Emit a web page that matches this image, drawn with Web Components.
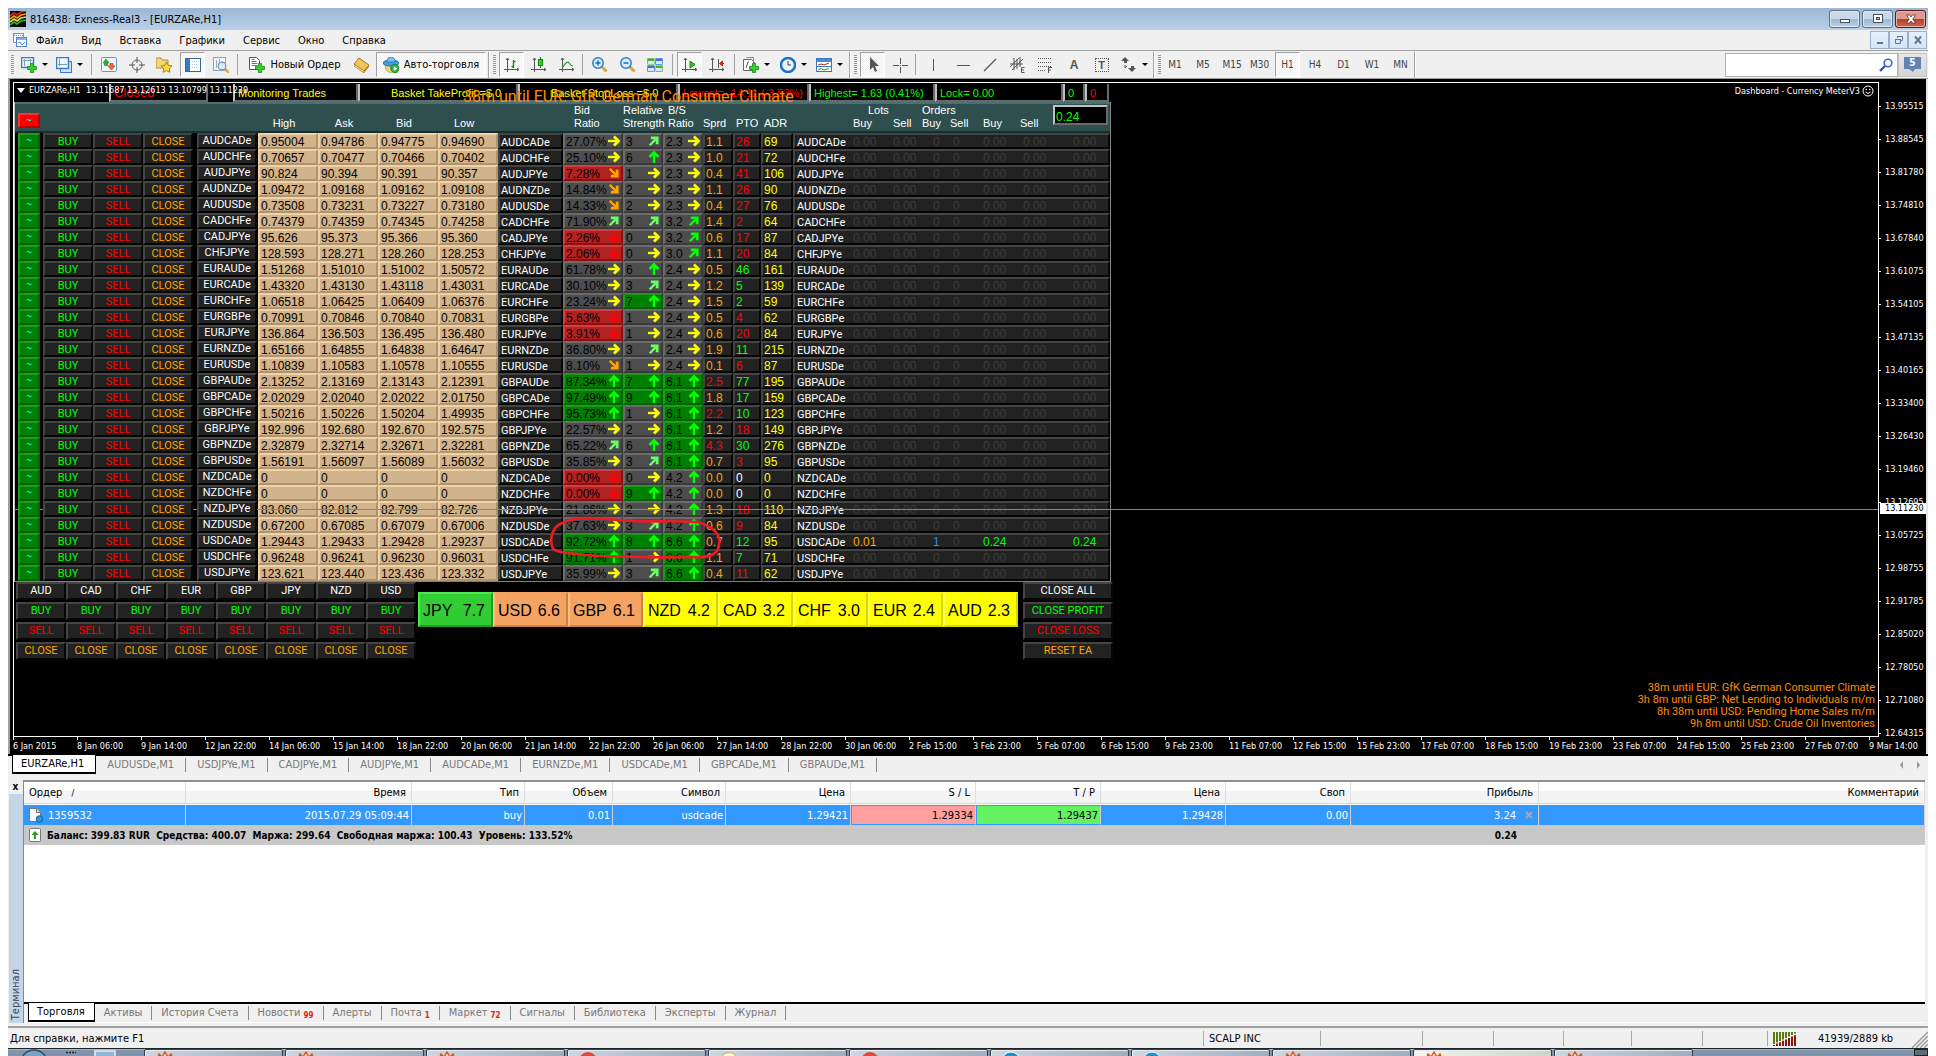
<!DOCTYPE html>
<html lang="ru">
<head>
<meta charset="utf-8">
<title>816438: Exness-Real3 - [EURZARe,H1]</title>
<style>
html,body{margin:0;height:100%;background:#fff}
body{font-family:"DejaVu Sans Condensed","DejaVu Sans",sans-serif;font-size:11px;color:#000;overflow:hidden}
</style>
</head>
<body>
<mt-app></mt-app>
<script>
const BASE = `:host,*{box-sizing:border-box}button{font:inherit;color:inherit;margin:0;padding:0;border:0;background:none;border-radius:0;white-space:nowrap;text-align:center}svg{display:block;flex:none}`;
class MtElement extends HTMLElement {
  connectedCallback() {
    if (this.shadowRoot) return;
    this.attachShadow({mode:'open'}).innerHTML = `<style>${BASE}${this.css()}</style>${this.html()}`;
  }
  css(){return ':host{display:block}'}
  html(){return '<slot></slot>'}
}
const svg = (w,h,body,extra='') => `<svg width="${w}" height="${h}" viewBox="0 0 ${w} ${h}" aria-hidden="true" ${extra}>${body}</svg>`;

customElements.define('mt-titlebar', class extends MtElement {
  css(){return `
:host{display:flex;align-items:center;height:22px;padding:0 2px;background:linear-gradient(#9cb6d3,#b8d0ea);font-size:11px}
.t{flex:1;margin-left:4px;white-space:nowrap}
.w{display:flex;gap:2px}
.w button{width:31px;height:18px;border:1px solid #5c6f86;border-radius:3px;background:linear-gradient(#c8d8e9 48%,#9fb7d0 50%,#b9cfe4);display:flex;align-items:center;justify-content:center;box-shadow:inset 0 0 0 1px #dfe9f4}
.w .x{border-color:#5a1a1c;background:linear-gradient(#dd9a90 48%,#bb3a26 50%,#cf6a4e);box-shadow:inset 0 0 0 1px #e8b0a8}`}
  html(){return svg(16,16,`<path d="M0 0h16v16H0z" fill="#0a0a08"/><g fill="none" stroke-width="1.6"><path d="M0 5l4-3 3 2 4-3 5-1" stroke="#e02818"/><path d="M0 8l4-3 3 2 4-3 5-1" stroke="#f0a020"/><path d="M0 11l4-3 3 2 4-3 5-1" stroke="#e8e030"/><path d="M0 14l4-3 3 2 4-3 5-1" stroke="#30b030"/></g>`)
  +`<span class="t">816438: Exness-Real3 - [EURZARe,H1]</span><div class="w">
<button aria-label="Minimize">${svg(12,10,'<rect x="1.500" y="5.500" width="9" height="3" fill="#fff" stroke="#44505e"/>')}</button>
<button aria-label="Maximize">${svg(12,10,'<rect x="1.500" y=".500" width="9" height="8" fill="#fff" stroke="#44505e"/><rect x="4.500" y="3.500" width="3" height="2" fill="#9fb7d0" stroke="#44505e"/>')}</button>
<button class="x" aria-label="Close">${svg(12,10,'<path d="M1.500 1h3L6 3l1.500-2h3L7.800 5l2.700 4h-3L6 7 4.500 9h-3l2.700-4z" fill="#fff" stroke="#5a3038" stroke-width=".800"/>')}</button></div>`}
});

customElements.define('mt-menubar', class extends MtElement {
  css(){return `
:host{display:flex;align-items:center;height:21px;padding:0 1px 0 5px;background:#f0f0f0;border-bottom:1px solid #a0a0a0}
nav{display:flex;gap:18px;margin-left:9px;flex:1}
.w{display:flex}.w button{width:19px;height:18px;border:1px solid #9ab0c6;background:linear-gradient(#e4f1fb,#d3e6f6);display:flex;align-items:center;justify-content:center}`}
  html(){return svg(14,14,`<rect x=".5" y=".5" width="10" height="9" fill="#fff" stroke="#6a96d8"/><path d="M1 2.500h9" stroke="#6a96d8" stroke-dasharray="1 1"/><rect x="3.500" y="4.500" width="10" height="9" fill="#fff" stroke="#5585d0"/><path d="M4 6h9" stroke="#8ab0e8" stroke-width="2"/><path d="M5 10l2-1 2 3 3-3" fill="none" stroke="#5585d0"/>`)
  +`<nav>${['Файл','Вид','Вставка','Графики','Сервис','Окно','Справка'].map(t=>`<button>${t}</button>`).join('')}</nav><div class="w">
<button aria-label="Minimize chart">${svg(10,10,'<path d="M2 8h6" stroke="#66788a" stroke-width="2"/>')}</button>
<button aria-label="Restore chart">${svg(10,10,'<path d="M3.500 3V1.500h5v4H7M3 1.500h6" stroke="#66788a" fill="none"/><path d="M1.500 4.500h5v4h-5zM1 4.500h6" fill="none" stroke="#66788a"/>')}</button>
<button aria-label="Close chart">${svg(10,10,'<path d="M2 1.500l6 7M8 1.500l-6 7" stroke="#66788a" stroke-width="2"/>')}</button></div>`}
});

const plus = (x,y)=>`<path d="M${x} ${y+3}h3v-3h3v3h3v3h-3v3h-3v-3h-3z" fill="#35d22c" stroke="#128a12" stroke-width=".8"/>`;
const axes = `<path d="M3.500 1v14M0 12.500h15M2 3l1.500-2L5 3M13 11l2 1.500-2 1.500" fill="none" stroke="#555"/>`;
const glass = s=>`<path d="M9.500 9.500l5 5" stroke="#d8a838" stroke-width="3"/><circle cx="6" cy="6" r="5.2" fill="#d6ecfb" stroke="#2f7cc8" stroke-width="1.500"/><path d="${s}" stroke="#2266aa" stroke-width="1.500"/>`;
const ICONS = {
  newchart:`<rect x=".5" y=".5" width="12" height="10" fill="#eaf3fd" stroke="#3b76c0" stroke-width="1.400"/><path d="M3.500 2v7M2 3.500h9M9.500 2v5" stroke="#7aa"/>`+plus(6.500,6.500),
  profile:`<rect x="4.500" y="4.500" width="11" height="11" fill="#cfe4fa" stroke="#3b76c0"/><rect x=".5" y=".5" width="12" height="11" fill="#eef6fe" stroke="#3b76c0" stroke-width="1.400"/><path d="M3.500 2v7M2 7.500h9" stroke="#79a"/>`,
  market:`<rect x=".5" y=".5" width="15" height="14" rx="1" fill="#eef5fd" stroke="#5b9ad8"/><path d="M3.500 8.500V6H2l3-4 3 4H6.500v2.500z" fill="#2eb02e" stroke="#16801a" stroke-width=".6"/><path d="M9 6.500h3V9h2l-3.500 4L7 9h2z" fill="#f0683a" stroke="#b03010" stroke-width=".6"/>`,
  cross:`<circle cx="8" cy="8" r="5" fill="none" stroke="#666"/><path d="M8 0v6M8 10v6M0 8h6M10 8h6" stroke="#555"/>`,
  star:`<path d="M0 1h5l1 2h6v8H0z" fill="#f2d77a" stroke="#b8902c"/><path d="M10.500 5l1.700 3.400 3.800.5-2.700 2.600.6 3.800-3.400-1.700-3.400 1.700.6-3.800L5 8.900l3.800-.5z" fill="#ffd83c" stroke="#c07a10"/>`,
  nav:`<rect x=".5" y="1.500" width="15" height="13" fill="#fff" stroke="#3567a8"/><path d="M1 2h4v12H1z" fill="#3c78c8"/><path d="M7 4.500h6M7 7.500h6M7 10.500h6" stroke="#a9c3e6" stroke-dasharray="1 1"/>`,
  tester:`<rect x=".5" y=".5" width="12" height="13" fill="#eef5fd" stroke="#86a6c8"/><path d="M3.500 3v8M6.500 2v7M9.500 4v6" stroke="#9ab"/><path d="M12 12l4 4" stroke="#d8a838" stroke-width="2.500"/><circle cx="9" cy="9" r="4" fill="#d6ecfb" fill-opacity=".8" stroke="#6a8cae"/>`,
  order:`<path d="M.5.5h7l3 3v9H.5z" fill="#fff" stroke="#555"/><path d="M2.500 4.500h5M2.500 6.500h6M2.500 8.500h6M2.500 2.500h3" stroke="#777"/>`+plus(6.500,6.500),
  book:`<path d="M5 1l10 7-5 6L0 7z" fill="#f0c65a" stroke="#a87418"/><path d="M0 7l10 7v2L0 9z" fill="#fff3c8" stroke="#a87418" stroke-width=".8"/><path d="M10 14l5-6v2l-5 6z" fill="#b97f1c"/>`,
  auto:`<path d="M2 8h12l-2 6-5 2-4-3z" fill="#f2cf86" stroke="#c09a40" stroke-width=".8"/><ellipse cx="8" cy="6" rx="8" ry="3" fill="#4a9ee0" stroke="#2070b0"/><path d="M4 5q0-5 4-5t4 5z" fill="#7fc0f0" stroke="#2070b0" stroke-width=".8"/><circle cx="12" cy="11.500" r="4.200" fill="#35b83a" stroke="#14802a"/><path d="M10.800 9.300l3.500 2.200-3.500 2.200z" fill="#fff"/>`,
  bars:axes+`<path d="M9.500 3v8M7.500 9.500h2M9.500 4.500h2" stroke="#128a12" stroke-width="1.400"/>`,
  candle:axes+`<path d="M9.500 0v11" stroke="#128a12"/><rect x="7.500" y="2.500" width="4" height="6" fill="#35d22c" stroke="#128a12"/>`,
  line:axes+`<path d="M4 10q4-7 6-4t4 3" fill="none" stroke="#2a9a2a" stroke-width="1.200"/>`,
  zin:glass('M6 3.500v5M3.500 6h5'), zout:glass('M3.500 6h5'),
  tile:`<g stroke="#fff" stroke-width=".5"><path d="M0 1h8v7H0zM8 8h8v7H8z" fill="#48b030"/><path d="M8 1h8v7H8zM0 8h8v7H0z" fill="#3a74d0"/></g><path d="M1 4h6v3H1zM9 4h6v3H9zM1 11h6v3H1zM9 11h6v3H9z" fill="#d8e8f8"/>`,
  scroll:axes+`<path d="M8 4l5 3.500L8 11z" fill="#35c22c" stroke="#128a12"/>`,
  shift:axes+`<path d="M9.500 2v9" stroke="#555"/><path d="M15 6.500h-3M13.500 4l-3 2.500 3 2.500z" stroke="#c02a10" fill="#c02a10"/>`,
  ind:`<path d="M.5 2.500h8l3 3v8H.5z" fill="#fff" stroke="#666"/><path d="M3.500.5h7v8" fill="none" stroke="#888"/><path d="M3 11l2-6 1 0" stroke="#555" fill="none"/>`+plus(6.500,6.500),
  clock:`<circle cx="8" cy="8" r="7" fill="#eaf4ff" stroke="#1c6cc8" stroke-width="2.400"/><path d="M8 4v4h3" fill="none" stroke="#345"/>`,
  tmpl:`<rect x=".5" y="1.500" width="15" height="13" fill="#fff" stroke="#3b76c0"/><path d="M1 2h14v3H1z" fill="#4a8ad8"/><path d="M2 8l3-1 3 1 5-2" stroke="#b03020" fill="none"/><path d="M1 9.500h14" stroke="#3b76c0"/><path d="M2 13l3-1.500 3 1.500 5-1.500" stroke="#2a9a2a" fill="none"/>`,
  cursor:`<path d="M5 0v13l3-3 2 5 2-1-2-5h4z" fill="#555"/>`,
  plusx:`<path d="M8.500 1v6M8.500 10v6M1 8.500h6M10 8.500h6M8.500 8v1" stroke="#555"/>`,
  vline:`<path d="M8.500 2v12" stroke="#555"/>`, hline:`<path d="M2 8.500h13" stroke="#555"/>`, trend:`<path d="M2 14L14 2" stroke="#555" stroke-width="1.200"/>`,
  chan:`<path d="M0 10L9 1M2 13L13 2M4 1v12M7 2v10M10 0v10M0 7h13" stroke="#555"/><path d="M14.500 10.500h-3v5h3M12 13h2" stroke="#555" fill="none"/>`,
  fibo:`<path d="M0 1.500h14M0 5.500h14M0 9.500h14M0 13.500h8" stroke="#555" stroke-dasharray="1 1"/><path d="M10.500 16v-5.500h3.500M11 13h2" stroke="#555" fill="none"/>`,
  arrows:`<path d="M4 0l4 4-2 0v2H3V4H0zM11 15l4-4h-2V9h-3v2H7z" fill="#555"/><path d="M4 8v3l2-2" stroke="#555" fill="none"/>`
};
const ic = (n,w=16)=>svg(w,16,ICONS[n]);
customElements.define('mt-tool', class extends MtElement {
  css(){return `:host{display:block;flex:none}
button{display:flex;align-items:center;justify-content:center;gap:5px;height:25px;width:100%;border:1px solid transparent;color:#000}
:host([on]) button{border-color:#a0a0a0 #fff #fff #a0a0a0;background:repeating-conic-gradient(#fff 0 25%,#f0f0f0 0 50%) 0 0/2px 2px}
:host([tf]) button{color:#444;font-size:10px}
:host([dd]) button::after{content:"";border:3px solid transparent;border-top-color:#000;border-bottom:0}`}
  html(){const i=this.getAttribute('icon');return `<button aria-label="${this.getAttribute('label')||i||''}">${i?ic(i):''}<slot></slot></button>`}
});
customElements.define('mt-toolbar', class extends MtElement {
  css(){return `
:host{display:flex;align-items:center;height:28px;padding-right:1px;background:#f0f0f0;border-bottom:1px solid #a0a0a0}
.g{width:3px;height:20px;margin:0 3px;background:repeating-linear-gradient(#999 0 1px,transparent 1px 2px);flex:none}
.s{width:1px;height:21px;background:#a0a0a0;flex:none}
.e{width:2px;height:26px;background:#a0a0a0;border-right:1px solid #fff;flex:none}
.m{margin-left:2px}.m4{margin-left:4px}
mt-tool{width:var(--w,28px)}
.l{color:#555;font:bold 12px "Liberation Sans",sans-serif}.T{border:1px dotted #555;line-height:12px;width:14px;font-size:11px}
.q{margin-left:auto;display:flex}
.box{display:flex;align-items:center;width:173px;height:24px;border:1px solid #b0b0b0;background:#fff;padding-right:4px}
input{border:0;outline:0;flex:1;min-width:0;font:inherit}
.n{width:29px;height:24px;display:flex;flex-direction:column;align-items:center;justify-content:center;background:linear-gradient(#e8e8e8,#d4d4d4);border:1px solid #c4c4c4}
.n span{width:17px;height:12px;background:#6482b4;color:#fff;font-weight:bold;line-height:12px;font-size:10px}`}
  html(){const t=(i,w,a='',txt='')=>`<mt-tool icon="${i}" ${a} style="--w:${w}px">${txt}</mt-tool>`;
  const f=(x,w,a='')=>`<mt-tool tf label="${x}" ${a} style="--w:${w}px">${x}</mt-tool>`;
  return `<i class="g"></i>${t('newchart',34,'dd')}${t('profile',36,'dd')}<i class="s m4"></i>${t('market',34)}${t('cross',22)}${t('star',32)}${t('nav',25,'on')}${t('tester',32)}<i class="s"></i>
${t('order',114,'','Новый Ордер')}${t('book',20)}${t('auto',110,'on class="m4"','Авто-торговля')}<i class="e m"></i><i class="g"></i>
${t('bars',25,'on')}${t('candle',30)}${t('line',26)}<i class="s m"></i>${t('zin',33)}${t('zout',23)}${t('tile',31)}<i class="s m"></i>${t('scroll',25,'on class="m4"')}${t('shift',30)}<i class="s m"></i>
${t('ind',42,'dd')}${t('clock',32,'dd')}${t('tmpl',40,'dd')}<i class="e"></i><i class="g"></i>
${t('cursor',25,'on')}${t('plusx',30)}<i class="s"></i>${t('vline',34)}${t('hline',26)}${t('trend',28)}${t('chan',28)}${t('fibo',28)}
<mt-tool label="Text" style="--w:28px"><span class="l">A</span></mt-tool><mt-tool label="Text label" style="--w:27px"><span class="l T">T</span></mt-tool>${t('arrows',38,'dd')}<i class="e"></i><i class="g"></i>
${f('M1',22)}${f('M5',34)}${f('M15',24)}${f('M30',31)}${f('H1',25,'on')}${f('H4',30)}${f('D1',27)}${f('W1',30)}${f('MN',27)}<i class="e"></i>
<div class="q"><label class="box"><input type="text" aria-label="Поиск">${svg(14,14,'<path d="M6 8l-5 5" stroke="#2c56a8" stroke-width="2.400"/><circle cx="9" cy="5" r="3.800" fill="#fff" stroke="#3a68c8" stroke-width="1.600"/>')}</label><button class="n"><span>5</span>${svg(8,3,'<path d="M0 0h6L4 3z" fill="#6482b4"/>')}</button></div>`}
});

const ARW={r:[0,'#ff0'],u:[-90,'#0f0'],n:[-45,'#6f6'],N:[-45,'#0f0'],s:[45,'#ffa500'],d:[90,'#f00']};
const arrow=k=>svg(12,12,`<g transform="rotate(${ARW[k][0]} 6 6)" fill="none" stroke="${ARW[k][1]}"><path d="M0 6h10" stroke-width="2.400"/><path d="M6 1.500L10.500 6 6 10.500" stroke-width="2.800"/></g>`);
const ROWS=`AUDCAD|0.95004|0.94786|0.94775|0.94690|27.07%-r|3-n|2.3-r|1.1|r26|69
AUDCHF|0.70657|0.70477|0.70466|0.70402|25.10%-r|6-u|2.3-r|1.0|r21|72
AUDJPY|90.824|90.394|90.391|90.357|7.28%-s-R|1-r|2.3-r|0.4|r41|106
AUDNZD|1.09472|1.09168|1.09162|1.09108|14.84%-s|2-r|2.3-r|1.1|r26|90
AUDUSD|0.73508|0.73231|0.73227|0.73180|14.33%-s|2-r|2.3-r|0.4|r27|76
CADCHF|0.74379|0.74359|0.74345|0.74258|71.90%-n|3-n|3.2-N|1.4|r2|64
CADJPY|95.626|95.373|95.366|95.360|2.26%-d-R|0-r|3.2-N|0.6|r17|87
CHFJPY|128.593|128.271|128.260|128.253|2.06%-d-R|0-r|3.0-N|1.1|r20|84
EURAUD|1.51268|1.51010|1.51002|1.50572|61.78%-r|6-u|2.4-r|0.5|g46|161
EURCAD|1.43320|1.43130|1.43118|1.43031|30.10%-r|3-n|2.4-r|1.2|g5|139
EURCHF|1.06518|1.06425|1.06409|1.06376|23.24%-r|7-u-G|2.4-r|1.5|g2|59
EURGBP|0.70991|0.70846|0.70840|0.70831|5.63%-d-R|1-r|2.4-r|0.5|r4|62
EURJPY|136.864|136.503|136.495|136.480|3.91%-d-R|1-r|2.4-r|0.6|r20|84
EURNZD|1.65166|1.64855|1.64838|1.64647|36.80%-r|3-n|2.4-r|1.9|g11|215
EURUSD|1.10839|1.10583|1.10578|1.10555|8.10%-s|1-r|2.4-r|0.1|r6|87
GBPAUD|2.13252|2.13169|2.13143|2.12391|87.34%-u-G|7-u-G|6.1-u-G|2.5|g77|195
GBPCAD|2.02029|2.02040|2.02022|2.01750|97.49%-u-G|9-u-G|6.1-u-G|1.8|g17|159
GBPCHF|1.50216|1.50226|1.50204|1.49935|95.73%-u-G|1-r|6.1-u-G|2.2|g10|123
GBPJPY|192.996|192.680|192.670|192.575|22.57%-r|2-r|6.1-u-G|1.2|r18|149
GBPNZD|2.32879|2.32714|2.32671|2.32281|65.22%-n|6-u|6.1-u-G|4.3|g30|276
GBPUSD|1.56191|1.56097|1.56089|1.56032|35.85%-r|3-n|6.1-u-G|0.7|r3|95
NZDCAD|0|0|0|0|0.00%-d-R|0-r|4.2-u|0.0|w0|0
NZDCHF|0|0|0|0|0.00%-d-R|9-u-G|4.2-u|0.0|w0|0
NZDJPY|83.060|82.812|82.799|82.726|21.86%-r|2-r|4.2-u|1.3|r18|110
NZDUSD|0.67200|0.67085|0.67079|0.67006|37.63%-r|3-n|4.2-u|0.6|r9|84
USDCAD|1.29443|1.29433|1.29428|1.29237|92.72%-u-G|8-u-G|6.6-u-G|0.7|g12|95
USDCHF|0.96248|0.96241|0.96230|0.96031|91.71%-u-G|1-r|6.6-u-G|1.1|g7|71
USDJPY|123.621|123.440|123.436|123.332|35.99%-r|3-n|6.6-u-G|0.4|r11|62`.split('\n').map(l=>l.split('|'));

const BEVEL=`.b{background:#222;border:2px solid;border-color:#444 #060606 #060606 #444}
.buy{color:#0f0}.sell{color:#f00}.close{color:#ffa500}.w{color:#fff}`;
customElements.define('mt-dashboard', class extends MtElement {
  css(){return `
:host{display:block;width:1097px;font:12px "Liberation Sans",Arial,sans-serif;color:#fff}
${BEVEL}
.st{display:flex;height:19px;padding-top:1px;font-size:11px;line-height:18px;white-space:nowrap}
.st span{flex:none;width:var(--w);padding-left:3px}.st .k{border:solid;border-width:0 2px 2px;border-color:#c0c0c0 #696969 #696969 #c0c0c0}
.st .m{padding-left:31px}.y{color:#ff0}.r{color:#f00}.g{color:#0f0}
table{table-layout:fixed;border-collapse:separate;border-spacing:0;width:100%;border:solid;border-width:0 1px 1px;border-color:#808080 #808080 #808080 #c0c0c0}
td,th{padding:0;font-weight:normal;text-align:left;white-space:nowrap;overflow:visible}
thead th{background:#2f4f4f;font-size:11px;line-height:12px}
thead tr:first-child th{height:15px;border-top:2px solid #4a7070;vertical-align:top}
thead tr+tr th{height:16px;border-bottom:2px solid #17302f;vertical-align:top;line-height:13px}
th.c{text-align:center;padding-right:8px}th.i{padding-left:11px}th.h{padding-left:5px}th.p{padding-left:3px}.o{display:inline-block;margin-left:-8px}
.tot{position:absolute;left:1039px;top:22px;width:55px;height:20px;background:#000;border:2px solid;border-color:#c0c0c0 #696969 #696969 #c0c0c0;color:#0f0;line-height:20px;padding-left:1px}
td{height:16px}
td>*{display:block;height:16px;width:100%}
td button{position:relative;z-index:2;font:11px/13px Roboto,"Liberation Sans",sans-serif}
td .tl,th .tl{width:22px;margin-left:3px;background:#008000;border:2px solid;border-color:#1f9a1f #006400 #006400 #1f9a1f;color:#0ff;font:10px/10px "Liberation Sans",sans-serif}
th .tl{display:block;height:15px;background:#f00;border-color:#ff3030 #c00000 #c00000 #ff3030;margin-top:-4px}
td .sy{line-height:10px;width:60px}
.n{background:#d2b48c;color:#000;border:2px solid;border-color:#f0d2a4 #b09470 #b09470 #f0d2a4;padding-left:1px;line-height:14px}
td .x{display:flex;justify-content:space-between;padding:0 1px;background:#4d4d4d;border:2px solid;border-color:#6c6c6c #3a3a3a #3a3a3a #6c6c6c;color:#000;line-height:14px}
td .R{background:#b22222;border-color:#d04040 #8c1010 #8c1010 #d04040}td .G{background:#008000;border-color:#1f9a1f #006400 #006400 #1f9a1f}
.v{padding-left:1px;line-height:14px}
.s2{font:11px/16px Roboto,"Liberation Sans",sans-serif;padding-left:1px}
.f{background:#222;border:solid;border-width:2px 0;border-color:#444 #060606 #060606;color:#3c3c3c;padding-left:3px;line-height:14px}
.f.w{border-left:2px solid #444;color:#fff;padding-left:2px;font:11px/16px Roboto,"Liberation Sans",sans-serif}
td:last-child .f{border-right:2px solid #060606}
.f.or{color:#ffa500}.f.bl{color:#1e90ff}.f.gr{color:#0f0}`}
  html(){
    const cols=[28,50,50,50,4,61,60,60,60,60,65,60,40,40,30,28,32,57,40,40,20,30,40,50,40];
    const x=(s)=>{const [t,a,b='']=s.split('-');return `<td><div class="x ${b}">${t}${arrow(a)}</div></td>`};
    const row=r=>{const hot=r[0]==='USDCAD',s=r[0]+'e';
      const v=hot?[['0.01','or'],['0.00',''],['1','bl'],['0',''],['0.24','gr'],['0.00',''],['0.24','gr']]:['0.00','0.00','0','0','0.00','0.00','0.00'].map(t=>[t,'']);
      return `<tr><td><button class="tl">~</button></td><td><button class="b buy">BUY</button></td><td><button class="b sell">SELL</button></td><td><button class="b close">CLOSE</button></td><td></td><td><button class="b w sy">${s}</button></td>${r.slice(1,5).map(n=>`<td><div class="n">${n}</div></td>`).join('')}<td><div class="b w s2">${s}</div></td>${x(r[5])}${x(r[6])}${x(r[7])}<td><div class="b v ${+r[8]>2?'sell':'close'}">${r[8]}</div></td><td><div class="b v ${r[9][0]}">${r[9].slice(1)}</div></td><td><div class="b v y">${r[10]}</div></td><td><div class="f w">${s}</div></td>${v.map(([t,c])=>`<td><div class="f ${c}">${t}</div></td>`).join('')}</tr>`};
    const sp=(w,c,t)=>`<span class="${c}" style="--w:${w}px">${t}</span>`;
    return `<div class="st">${sp(95,'','')}<span class="k r" style="--w:99px;font-size:13px">Closed</span>${sp(25,'','')}${sp(125,'k y','Monitoring Trades')}${sp(160,'k y m','Basket TakeProfit =$ 0')}${sp(160,'k y m','Basket StopLoss =$ 0')}${sp(131,'k r','Lowest= -14.11 (-3.53%)')}${sp(126,'k g','Highest= 1.63 (0.41%)')}${sp(128,'k g','Lock= 0.00')}${sp(22,'k g','0')}${sp(24,'k r','0')}</div>
<table><colgroup>${cols.map(c=>`<col style="width:${c}px">`).join('')}</colgroup>
<thead><tr><th colspan="11"></th><th class="i">Bid</th><th class="c">Relative</th><th class="h">B/S</th><th colspan="4"></th><th colspan="2"><span style="margin-left:18px">Lots</span></th><th colspan="2"><span class="o">Orders</span></th><th colspan="3"></th></tr>
<tr><th colspan="6"><button class="tl">~</button></th><th class="c">High</th><th class="c">Ask</th><th class="c">Bid</th><th class="c">Low</th><th></th><th class="i">Ratio</th><th>Strength</th><th class="h">Ratio</th><th>Sprd</th><th class="p">PTO</th><th class="p">ADR</th><th></th><th class="p">Buy</th><th class="p">Sell</th><th><span class="o">Buy</span></th><th>Sell</th><th class="p">Buy</th><th>Sell</th><th></th></tr></thead>
<tbody>${ROWS.map(row).join('')}</tbody></table><output class="tot">0.24</output>`}
});

customElements.define('mt-baskets', class extends MtElement {
  css(){return `
:host{display:flex;align-items:flex-start;padding-left:2px;font:11px Roboto,"Liberation Sans",sans-serif}
${BEVEL}
.grid{display:grid;grid-template-columns:repeat(8,50px);grid-auto-rows:18px;row-gap:2px}
.col{display:grid;grid-template-columns:90px;grid-auto-rows:18px;row-gap:2px;margin-left:5px}
.b{line-height:14px}
.m{display:flex;margin:10px 0 0 2px;font:16px/33px "Liberation Sans",sans-serif;color:#000}
.m div{display:flex;justify-content:space-between;width:75px;height:35px;padding:0 6px 0 3px;border:2px solid;background:#ff0;border-color:#ff0 #d8d800 #d8d800 #ffff50}
.m .g{background:#32cd32;border-color:#50e850 #20a020 #20a020 #50e850}.m .o{background:#f4a460;border-color:#f4a460 #d08040 #d08040 #ffc080}`}
  html(){const c=['AUD','CAD','CHF','EUR','GBP','JPY','NZD','USD'];
  const r=(t,k)=>c.map(s=>`<button class="b ${k}">${t||s}</button>`).join('');
  return `<div class="grid">${r('','w')}${r('BUY','buy')}${r('SELL','sell')}${r('CLOSE','close')}</div>
<div class="m">${[['JPY','7.7','g'],['USD','6.6','o'],['GBP','6.1','o'],['NZD','4.2',''],['CAD','3.2',''],['CHF','3.0',''],['EUR','2.4',''],['AUD','2.3','']].map(([a,b,k])=>`<div class="${k}"><span>${a}</span><span>${b}</span></div>`).join('')}</div>
<div class="col"><button class="b w">CLOSE ALL</button><button class="b buy">CLOSE PROFIT</button><button class="b sell">CLOSE LOSS</button><button class="b close">RESET EA</button></div>`}
});

customElements.define('mt-chart', class extends MtElement {
  css(){return `
:host{display:grid;grid-template-columns:1fr 47px;grid-template-rows:1fr 17px;min-height:0;background:#000;border-left:2px solid #a0a0a0;border-right:2px solid #e4e4e4;padding:3px 0 0 3px;color:#fff;font-size:9px}
.plot{position:relative;border:1px solid #fff;min-width:0}
.title,.ea,.news,.big,.line,.ring{position:absolute;white-space:nowrap}
.title{left:3px;top:1px;line-height:13px;z-index:3;display:flex;align-items:center;gap:4px;white-space:pre}
.ea{right:4px;top:1px;display:flex;align-items:center;gap:2px;line-height:14px}
.big{left:449px;top:4px;font:16px/20px Roboto,"Liberation Sans",sans-serif;color:#ff8c00;z-index:4}
.news{right:3px;bottom:6px;text-align:right;font:11px/12px Roboto,"Liberation Sans",sans-serif;color:#ff8c00}
.line{left:0;right:0;top:426px;height:1px;background:#778899;z-index:1}
.ring{left:534px;top:432px;z-index:5}
.price{display:flex;flex-direction:column;justify-content:space-between;padding-top:18px;margin-bottom:-2px;position:relative;line-height:12px}
.price span{display:flex;align-items:center;gap:4px}.price span::before{content:"";width:2px;height:1px;background:#fff}
.price b{position:absolute;left:1px;right:0;top:421px;height:11px;line-height:11px;background:#fff;color:#000;font-weight:normal;padding-left:5px}
.time{grid-column:1/3;display:flex;overflow:hidden;line-height:13px}
.time span{flex:0 0 64px;white-space:nowrap}.time span::before{content:"";display:block;width:1px;height:3px;background:#fff}`}
  html(){const p='13.95515 13.88545 13.81780 13.74810 13.67840 13.61075 13.54105 13.47135 13.40165 13.33400 13.26430 13.19460 13.12695 13.05725 12.98755 12.91785 12.85020 12.78050 12.71080 12.64315'.split(' ');
  const t='6 Jan 2015,8 Jan 06:00,9 Jan 14:00,12 Jan 22:00,14 Jan 06:00,15 Jan 14:00,18 Jan 22:00,20 Jan 06:00,21 Jan 14:00,22 Jan 22:00,26 Jan 06:00,27 Jan 14:00,28 Jan 22:00,30 Jan 06:00,2 Feb 15:00,3 Feb 23:00,5 Feb 07:00,6 Feb 15:00,9 Feb 23:00,11 Feb 07:00,12 Feb 15:00,15 Feb 23:00,17 Feb 07:00,18 Feb 15:00,19 Feb 23:00,23 Feb 07:00,24 Feb 15:00,25 Feb 23:00,27 Feb 07:00,9 Mar 14:00'.split(',');
  return `<div class="plot"><mt-dashboard></mt-dashboard><mt-baskets></mt-baskets>
<div class="title">${svg(8,5,'<path d="M0 0h8L4 5z" fill="#fff"/>')}<span>EURZARe,H1  13.11687 13.12613 13.10799 13.11230</span></div>
<div class="ea">Dashboard - Currency MeterV3${svg(12,12,'<circle cx="6" cy="6" r="5" fill="none" stroke="#fff"/><path d="M3.500 7q2.500 3 5 0" fill="none" stroke="#fff"/><circle cx="4.200" cy="4.500" r=".8" fill="#fff"/><circle cx="7.800" cy="4.500" r=".8" fill="#fff"/>')}</div>
<div class="big">38m until EUR: GfK German Consumer Climate</div>
<div class="line"></div>
<div class="news">38m until EUR: GfK German Consumer Climate<br>3h 8m until GBP: Net Lending to Individuals m/m<br>8h 38m until USD: Pending Home Sales m/m<br>9h 8m until USD: Crude Oil Inventories</div>
${svg(176,46,'<path d="M5 34C1 24 4 12 14 8C28 1 50 3 70 5C92 8 120 5 148 7C164 10 174 20 171 30C170 40 160 43 146 42C110 43 80 42 50 41C26 39 10 38 5 34" fill="none" stroke="#ed1c24" stroke-width="2.600"/>','class="ring"')}</div>
<div class="price">${p.map(v=>`<span>${v}</span>`).join('')}<b>13.11230</b></div>
<div class="time">${t.map(v=>`<span>${v}</span>`).join('')}</div>`}
});

customElements.define('mt-tabs', class extends MtElement {
  css(){return `
:host{display:flex;align-items:flex-start;height:22px;border-top:2px solid #000;background:#f0f0f0;color:#777;padding-left:4px}
button{height:14px;line-height:14px;margin-top:2px;padding:0 var(--pad,11px);border-right:1px solid #888}
.on{height:19px;margin-top:-1px;line-height:17px;background:#fff;color:#000;border:1px solid #000;border-top:0;border-bottom-width:2px;padding-left:8px}
sup{font-size:8px;font-weight:bold;color:#e02020;vertical-align:-2px;margin-left:3px;line-height:8px}
svg{margin:5px 8px 0 auto}`}
  html(){const l=this.getAttribute('items').split('|');
  return l.map((t,i)=>{const [a,n]=t.split('#');return `<button class="${i?'':'on'}">${a}${n?`<sup>${n}</sup>`:''}</button>`}).join('')+(this.hasAttribute('arrows')?svg(20,8,'<path d="M3 0v8L0 4zM17 0v8l3-4z" fill="#999"/>'):'')}
});

customElements.define('mt-terminal', class extends MtElement {
  css(){return `
:host{display:grid;grid-template-columns:15px 1fr;background:#f0f0f0;padding:4px 3px 3px 0}
.side{display:flex;flex-direction:column;align-items:center}
.side button{height:14px;line-height:12px;font-weight:bold;font-size:10px}
.side div{flex:1;width:14px;background:#c3d5e6;display:flex;align-items:flex-end;justify-content:center;padding-bottom:3px}
.side span{writing-mode:vertical-rl;transform:rotate(180deg);color:#445;line-height:14px}
.main{display:flex;flex-direction:column;border-left:1px solid #888;border-top:2px solid #909090;background:#fff;min-width:0}
.body{flex:1}
mt-tabs{--pad:9px;height:21px;border-bottom:1px solid #fff}
table{width:100%;table-layout:fixed;border-collapse:separate;border-spacing:0}
td,th{padding:0 2px 0 0;text-align:right;white-space:nowrap;font-weight:normal}
th{height:22px;background:linear-gradient(#fff 40%,#f3f4f6 45%);border-right:1px solid #dedfe1;border-bottom:1px solid #d5d5d5;padding-right:5px}
th:first-child,td:first-child{text-align:left;padding-left:5px}
.r td{height:20px;background:#3399ff;color:#fff;border-right:1px solid #d0d0d0}
.r td.sl,.r td.tp{color:#000;border:1px solid #3399ff;border-right-color:#d0d0d0;background:#ff9f9f}.r td.tp{background:#62f262}
.pr div{display:flex;justify-content:flex-end;align-items:center;gap:9px;padding-right:3px}
.sp td{height:1px;padding:0;background:#fff}
.t td{height:20px;background:#c8c8c8;font-weight:bold;font-size:10px}
.t .q{padding-right:22px}
.fl{display:flex;align-items:center;gap:5px}`}
  html(){const c=[162,226,113,88,113,125,125,125,125,125,188];
  return `<div class="side"><button aria-label="Закрыть">x</button><div><span>Терминал</span></div></div><div class="main"><div class="body"><table><colgroup>${c.map(w=>`<col style="width:${w}px">`).join('')}<col></colgroup>
<thead><tr><th>Ордер <small style="margin-left:6px">/</small></th>${['Время','Тип','Объем','Символ','Цена','S / L','T / P','Цена','Своп','Прибыль','Комментарий'].map(t=>`<th>${t}</th>`).join('')}</tr></thead>
<tbody><tr class="sp"><td colspan="12"></td></tr><tr class="r"><td><div class="fl">${svg(14,15,'<path d="M.5.5h7l4 4v9H.5z" fill="#fff" stroke="#777"/><path d="M7.500.5v4h4" fill="#ddd" stroke="#777"/><circle cx="10.500" cy="11" r="3.300" fill="#2a9ae0" stroke="#14609c"/>')}1359532</div></td><td>2015.07.29 05:09:44</td><td>buy</td><td>0.01</td><td>usdcade</td><td>1.29421</td><td class="sl">1.29334</td><td class="tp">1.29437</td><td>1.29428</td><td>0.00</td><td class="pr"><div>3.24${svg(8,8,'<path d="M1 1l6 6M7 1L1 7" stroke="#a9a9a9" stroke-width="1.800"/>')}</div></td><td></td></tr>
<tr class="t"><td colspan="10"><div class="fl">${svg(13,14,'<rect x=".5" y=".5" width="11" height="13" rx="1" fill="#fff" stroke="#777"/><path d="M6 3l3.500 4H7v4H5V7H2.500z" fill="#2c9a1c"/>')}<span style="white-space:pre">Баланс: 399.83 RUR  Средства: 400.07  Маржа: 299.64  Свободная маржа: 100.43  Уровень: 133.52%</span></div></td><td class="q">0.24</td><td></td></tr></tbody></table></div>
<mt-tabs items="Торговля|Активы|История Счета|Новости#99|Алерты|Почта#1|Маркет#72|Сигналы|Библиотека|Эксперты|Журнал"></mt-tabs></div>`}
});

customElements.define('mt-statusbar', class extends MtElement {
  css(){return `
:host{display:flex;align-items:stretch;height:22px;background:#f0f0f0;border-top:2px solid #a0a0a0;padding-top:1px}
div{border-left:1px solid #a8a8a8;flex:0 0 var(--w);padding-left:5px;margin:2px 0;display:flex;align-items:center;gap:22px;white-space:nowrap}
.h{flex:1;border:0;padding-left:2px}.g{align-self:flex-end}`}
  html(){let b='';for(let i=0;i<8;i++)b+=`<path d="M${i*3} 0h2v${Math.max(1,12-i*1.5)}h-2z" fill="#5a7a10"/><path d="M${i*3} ${13-i*1.400}h2V14h-2z" fill="#8a1408"/>`;
  return `<div class="h">Для справки, нажмите F1</div><div style="--w:117px">SCALP INC</div>${[102,71,70,68,71,65].map(w=>`<div style="--w:${w}px"></div>`).join('')}<div style="--w:144px">${svg(23,14,b)}41939/2889 kb</div>${svg(17,17,'<path d="M1 17L17 1M5 17L17 5M9 17l8-8M13 17l4-4" stroke="#999" stroke-width="1.400"/>','class="g"')}`}
});

customElements.define('mt-taskbar', class extends MtElement {
  css(){return `
:host{display:flex;height:8px;overflow:hidden;background:#8094ab;border-top:1px solid #1c242c;box-shadow:inset 0 1px #a6b6c8}
.s{flex:0 0 136px;display:flex;gap:18px;padding-left:12px;align-items:flex-start}
button{flex:0 0 139px;margin-right:2px;height:30px;border:1px solid #343f4c;border-radius:2px;background:linear-gradient(100deg,#ced6df,#9dadbe);padding:1px 0 0 10px;box-shadow:inset 1px 1px #e8edf2}
button.on{background:linear-gradient(100deg,#f4f6ea,#c9d4c4)}
button svg{margin:0}
.d{margin-left:auto;width:14px;background:#5d6c7c;border:1px solid #222}`}
  html(){const o='<path d="M2 8l2-5 3 3 3-5 3 5 3-3 2 5" fill="#f6e0b0" stroke="#e05018" stroke-width="1.300"/>',r='<circle cx="10" cy="10" r="9" fill="#e04838"/>',y='<circle cx="10" cy="10" r="8.500" fill="#fbf6d8" stroke="#c8b060"/>',b='<circle cx="10" cy="10" r="9" fill="#1e8fd0" stroke="#fff"/>';
  return `<div class="s">${svg(28,20,'<circle cx="14" cy="14" r="13" fill="#7da3c4" stroke="#2c4a66" stroke-width="1.500"/>')}${svg(10,6,'<path d="M0 3.500h10" stroke="#222" stroke-dasharray="2 1" stroke-width="1.500"/>')}${svg(22,12,'<rect x="1" y="2" width="20" height="12" fill="#8fb4d6" stroke="#e8f0f8" stroke-width="1.500"/>')}</div>${[o,o,o,r,y,r,b,b,o,o,o].map((i,k)=>`<button class="${k===9?'on':''}" aria-label="Task ${k+1}" style="display:flex;align-items:flex-start">${svg(20,12,i)}</button>`).join('')}<div class="d"></div>`}
});

customElements.define('mt-app', class extends MtElement {
  css(){return `
:host{display:flex;flex-direction:column;height:100vh;padding:8px 8px 0;background:#fff}
mt-chart{flex:1}mt-terminal{flex:0 0 250px}mt-titlebar,mt-menubar,mt-toolbar,mt-statusbar,mt-taskbar,.ct{flex:none}`}
  html(){return `<mt-titlebar></mt-titlebar><mt-menubar></mt-menubar><mt-toolbar></mt-toolbar><mt-chart></mt-chart><mt-tabs class="ct" arrows items="EURZARe,H1|AUDUSDe,M1|USDJPYe,M1|CADJPYe,M1|AUDJPYe,M1|AUDCADe,M1|EURNZDe,M1|USDCADe,M1|GBPCADe,M1|GBPAUDe,M1"></mt-tabs><mt-terminal></mt-terminal><mt-statusbar></mt-statusbar><mt-taskbar></mt-taskbar>`}
});
</script>
</body>
</html>
